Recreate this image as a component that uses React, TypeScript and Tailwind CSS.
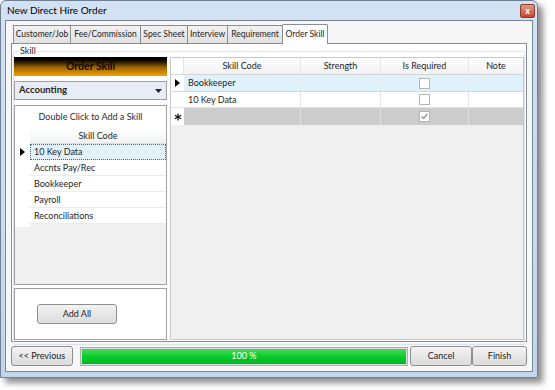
import { useState } from 'react';

const tabs = [
  { label: 'Customer/Job', w: 'w-[58px]' },
  { label: 'Fee/Commission', w: 'w-[71px]' },
  { label: 'Spec Sheet', w: 'w-[48px]' },
  { label: 'Interview', w: 'w-[41px]' },
  { label: 'Requirement', w: 'w-[56px]' },
];
const skills = ['10 Key Data', 'Accnts Pay/Rec', 'Bookkeeper', 'Payroll', 'Reconciliations'];

function Arrow() {
  return (
    <svg width="5" height="8" viewBox="0 0 5 8">
      <path d="M0 0 L5 4 L0 8 Z" fill="#000" />
    </svg>
  );
}

function Star() {
  return (
    <svg width="8" height="8" viewBox="0 0 8 8">
      <path d="M4 0.5 V7.5 M0.8 2.2 L7.2 5.8 M0.8 5.8 L7.2 2.2" stroke="#111" strokeWidth="1.2" />
    </svg>
  );
}

function Check({ checked }: { checked?: boolean }) {
  return (
    <div className="w-[11px] h-[11px] border border-[#b4b4b4] bg-white flex items-center justify-center">
      {checked && (
        <svg width="9" height="9" viewBox="0 0 9 9">
          <path d="M1.5 4.5 L3.5 6.5 L7.5 2" stroke="#8a8a8a" strokeWidth="1.2" fill="none" />
        </svg>
      )}
    </div>
  );
}

const btn = 'h-[20px] border border-[#8e8f8f] rounded-[3px] bg-gradient-to-b from-[#f3f3f3] to-[#dcdcdc] text-[#1e1e1e]';

export default function App() {
  const [selected, setSelected] = useState(0);

  return (
    <div className="w-[555px] h-[390px] bg-white text-[9px] text-[#1e1e1e]" style={{ fontFamily: 'Lato, "Noto Sans", sans-serif' }}>
      <div className="w-[538px] h-[378px] flex flex-col bg-gradient-to-b from-[#d3e2f3] to-[#c2d6ec] border border-[#6f7f94] rounded-t-[6px] shadow-[5px_5px_6px_rgba(0,0,0,0.45)]">
        {/* title bar */}
        <div className="h-[19px] flex items-center justify-between pl-[6px] pr-[2px] shrink-0">
          <span className="text-[10px] text-black">New Direct Hire Order</span>
          <div className="w-[15px] h-[14px] rounded-[2px] border border-[#8d3b2c] bg-gradient-to-b from-[#e39a86] to-[#c3452b] flex items-center justify-center text-white text-[9px] font-bold leading-none">x</div>
        </div>

        {/* client area */}
        <div className="flex-1 mx-[4px] mb-[5px] border border-[#7a8797] bg-[#f7f7f7] flex flex-col px-[5px] pt-[3px]">
          {/* tab strip */}
          <div className="flex items-end h-[19px] shrink-0 pl-[2px] text-[8.5px]">
            {tabs.map(t => (
              <div key={t.label} className={`${t.w} h-[18px] flex items-center justify-center whitespace-nowrap bg-gradient-to-b from-[#f2f2f2] to-[#e1e1e1] border border-b-0 border-[#898c95] -mr-[1px]`}>
                {t.label}
              </div>
            ))}
            <div className="w-[46px] h-[20px] flex items-center justify-center whitespace-nowrap bg-white border border-b-0 border-[#898c95] rounded-t-[2px] -mb-[1px] z-10 relative">
              Order Skill
            </div>
          </div>

          {/* tab page */}
          <div className="h-[299px] bg-white border border-[#898c95] px-[1px] pt-[1px] shrink-0">
            <div className="relative h-[294px] border border-[#dde3ea] rounded-[2px] mt-[6px] flex gap-[3px] pt-[5px]">
              <span className="absolute -top-[6px] left-[5px] bg-white px-[1px] leading-none">Skill</span>

              {/* left column */}
              <div className="w-[153px] flex flex-col">
                <div className="h-[19px] bg-gradient-to-b from-black from-5% via-[#9c6600] via-55% to-[#f5a300] flex items-center justify-center font-bold text-[10.5px] text-[#100a00]">
                  Order Skill
                </div>
                <div className="h-[19px] mt-[5px] bg-[#e8ecf6] border border-[#a0a0a0] flex items-center justify-between px-[4px] font-bold text-[9.5px]">
                  <span>Accounting</span>
                  <svg width="7" height="4" viewBox="0 0 7 4"><path d="M0 0 L7 0 L3.5 4 Z" fill="#222" /></svg>
                </div>
                <div className="h-[180px] mt-[5px] border border-[#a0a0a0] bg-[#f0f0f0] flex flex-col">
                  <div className="h-[22px] bg-white flex items-center justify-center text-[#2b2b3b]">Double Click to Add a Skill</div>
                  <div className="flex">
                    <div className="w-[15px] bg-white" />
                    <div className="flex-1 h-[16px] bg-gradient-to-b from-[#ffffff] to-[#f1f2f4] border-b border-[#dcdde0] flex items-center justify-center">Skill Code</div>
                  </div>
                  {skills.map((s, i) => (
                    <div key={s} className="flex h-[16px]" onClick={() => setSelected(i)}>
                      <div className="w-[15px] bg-white flex items-center justify-center">{i === selected && <Arrow />}</div>
                      <div
                        className={
                          i === selected
                            ? 'flex-1 border border-dotted border-[#2a6bc2] bg-[#e3f1fb] flex items-center px-[3px]'
                            : 'flex-1 bg-white border-b border-[#ececec] flex items-center px-[4px]'
                        }
                      >
                        {s}
                      </div>
                    </div>
                  ))}
                  <div className="h-[3px] flex"><div className="w-[15px] bg-white" /></div>
                </div>
                <div className="h-[52px] mt-[3px] border border-[#a0a0a0] bg-white flex items-center pl-[22px]">
                  <button className={`w-[80px] ${btn}`}>Add All</button>
                </div>
              </div>

              {/* right grid */}
              <div className="flex-1 h-[283px] border border-[#c8c8c8] bg-[#f0f0f0] flex flex-col">
                <div className="flex h-[17px] bg-gradient-to-b from-[#ffffff] to-[#f1f2f4] border-b border-[#d5d5d5]">
                  <div className="w-[13px] bg-white border-r border-[#e3e3e3]" />
                  <div className="w-[117px] border-r border-[#e3e3e3] flex items-center justify-center">Skill Code</div>
                  <div className="w-[80px] border-r border-[#e3e3e3] flex items-center justify-center">Strength</div>
                  <div className="w-[88px] border-r border-[#e3e3e3] flex items-center justify-center">Is Required</div>
                  <div className="flex-1 flex items-center justify-center">Note</div>
                </div>
                <div className="flex h-[17px] bg-[#dff1fb] border-b border-[#bcdff1]">
                  <div className="w-[13px] bg-white flex items-center justify-center"><Arrow /></div>
                  <div className="w-[117px] border-r border-[#e6eef3] flex items-center px-[4px]">Bookkeeper</div>
                  <div className="w-[80px] border-r border-[#e6eef3]" />
                  <div className="w-[88px] border-r border-[#e6eef3] flex items-center justify-center"><Check /></div>
                  <div className="flex-1" />
                </div>
                <div className="flex h-[16px] bg-white border-b border-[#e3e3e3]">
                  <div className="w-[13px]" />
                  <div className="w-[117px] border-r border-[#e8e8e8] flex items-center px-[4px]">10 Key Data</div>
                  <div className="w-[80px] border-r border-[#e8e8e8]" />
                  <div className="w-[88px] border-r border-[#e8e8e8] flex items-center justify-center"><Check /></div>
                  <div className="flex-1" />
                </div>
                <div className="flex h-[17px] bg-[#cccccc]">
                  <div className="w-[13px] bg-white flex items-center justify-center"><Star /></div>
                  <div className="w-[117px] border-r border-[#e0e0e0]" />
                  <div className="w-[80px] border-r border-[#e0e0e0]" />
                  <div className="w-[88px] border-r border-[#e0e0e0] flex items-center justify-center"><Check checked /></div>
                  <div className="flex-1" />
                </div>
              </div>
            </div>
          </div>

          {/* bottom bar */}
          <div className="flex items-center mt-[4px]">
            <button className={`w-[62px] ${btn}`}>&lt;&lt; Previous</button>
            <div className="w-[330px] h-[19px] ml-[7px] border border-[#b0b0b0] bg-[#dcdcdc] p-[1px]">
              <div className="h-full bg-gradient-to-b from-[#3fd85a] via-[#06cc2a] to-[#04b424] flex items-center justify-center text-white">100 %</div>
            </div>
            <div className="flex ml-[2px]">
              <button className={`w-[62px] ${btn}`}>Cancel</button>
              <button className={`w-[55px] ${btn}`}>Finish</button>
            </div>
          </div>
        </div>
      </div>
    </div>
  );
}
